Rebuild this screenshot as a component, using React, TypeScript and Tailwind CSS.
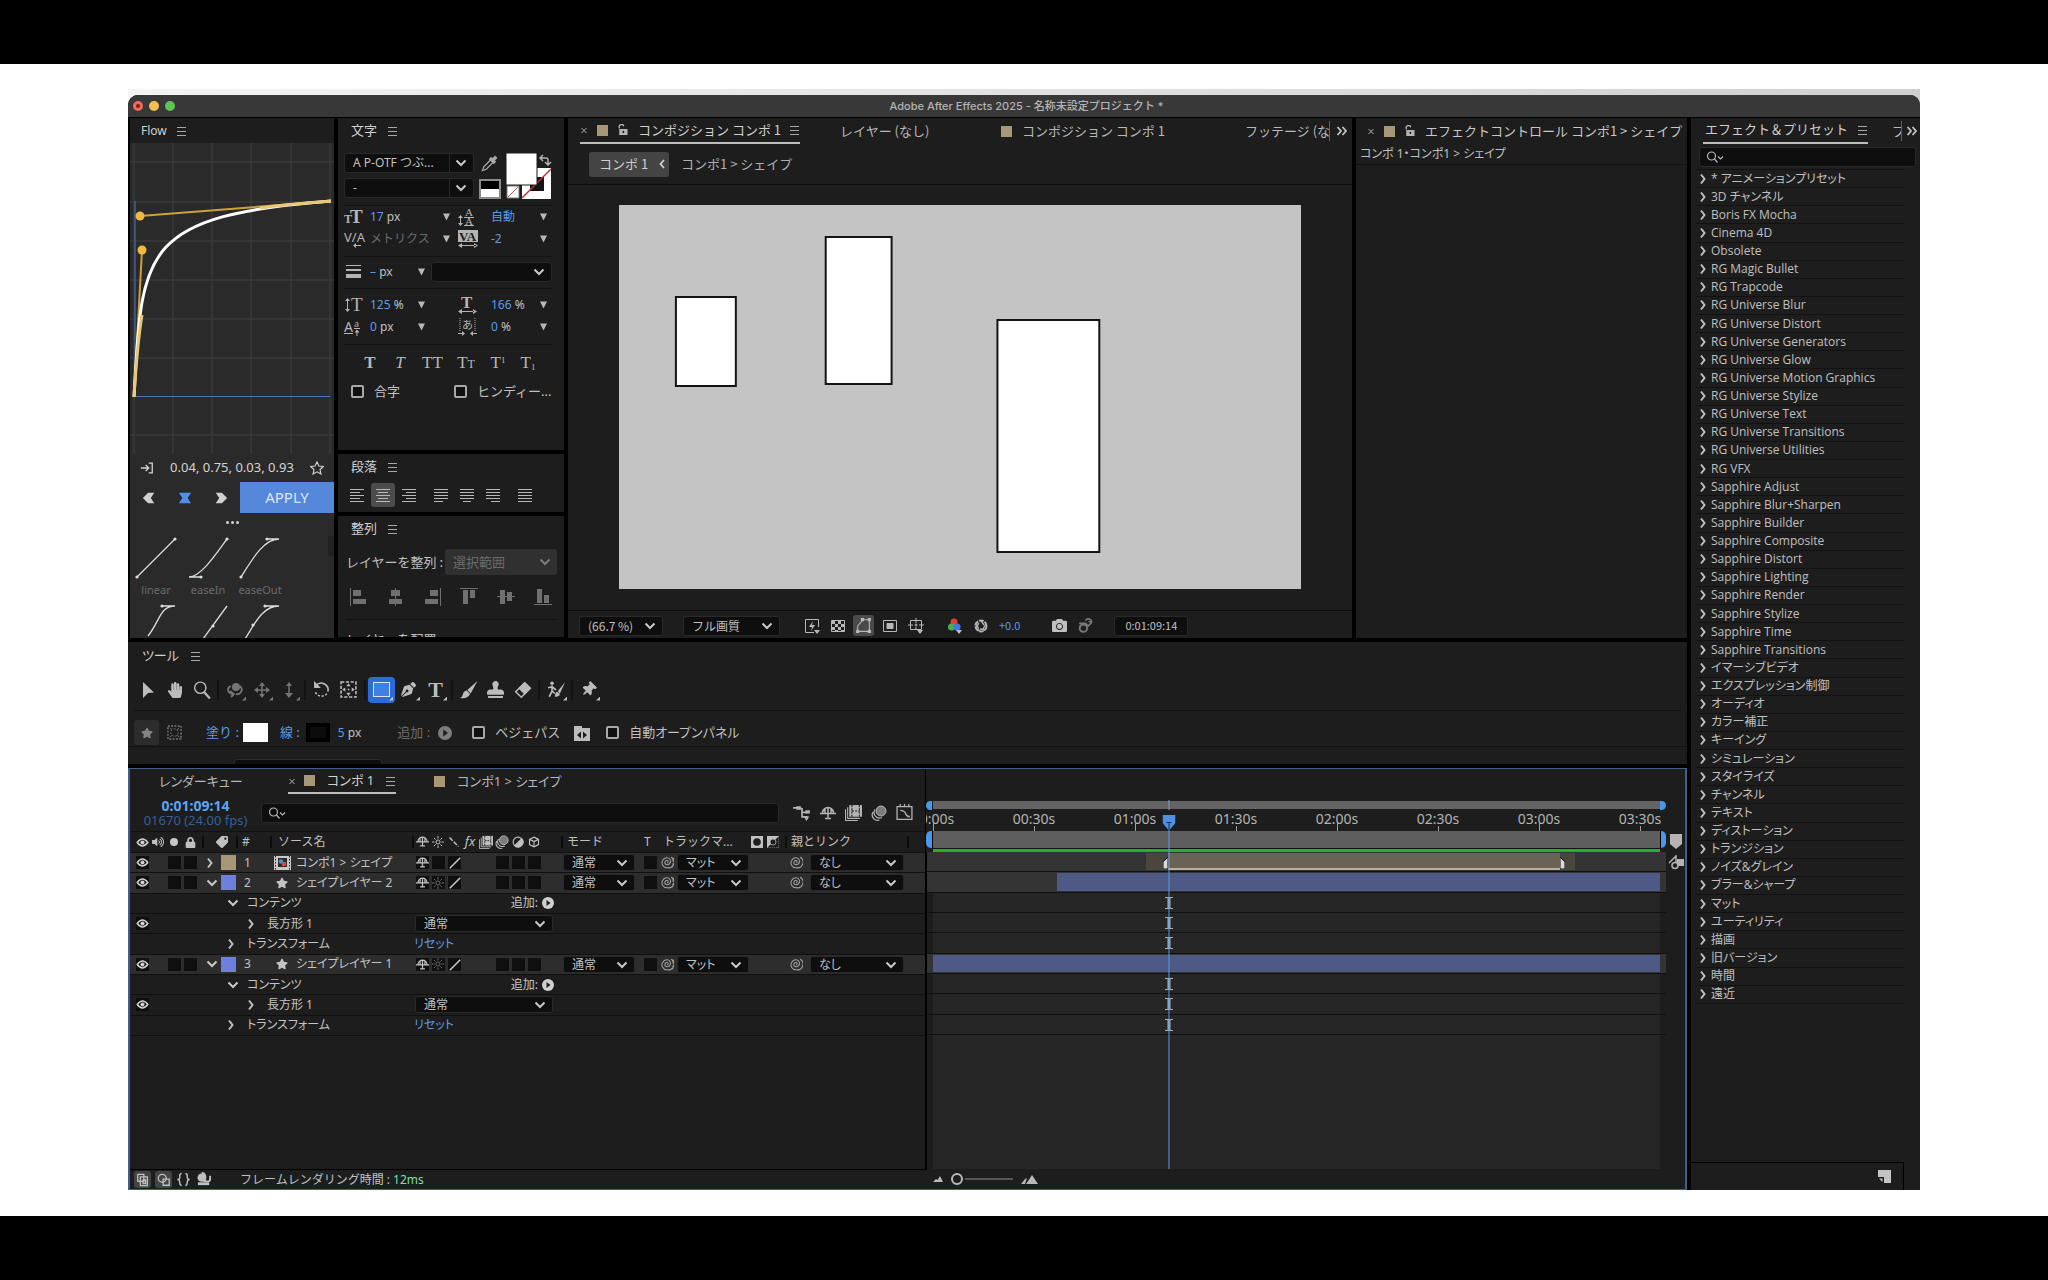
import React from "react";
import clsx from "clsx";
import {
  FaCamera,
  FaEraser,
  FaHandPaper,
  FaLock,
  FaPenNib,
  FaStamp,
  FaStar,
  FaTag,
  FaThumbtack,
  FaVolumeUp,
} from "react-icons/fa";

interface SvgProps {
  children: React.ReactNode;
  className?: string;
}

// 16x16 stroke icon
const Icon = ({ children, className = "size-4" }: SvgProps) => (
  <svg
    viewBox="0 0 16 16"
    fill="none"
    stroke="currentColor"
    aria-hidden="true"
    className={clsx("shrink-0", className)}
  >
    {children}
  </svg>
);

const Burger = () => (
  <button type="button" aria-label="パネルメニュー" className="h-3 w-2.5 shrink-0 text-[#a8a8a8]">
    <svg viewBox="0 0 10 12" className="h-3 w-2.5" stroke="currentColor" aria-hidden="true">
      <path d="M0 2.5h9M0 6.5h9M0 10.5h9" />
    </svg>
  </button>
);

const Down = ({ className = "text-[#c8c8c8]" }: { className?: string }) => (
  <svg viewBox="0 0 12 8" className={clsx("h-2 w-3 shrink-0", className)} fill="none" stroke="currentColor" strokeWidth="2" aria-hidden="true">
    <path d="M1.5 1.5 6 6l4.5-4.5" />
  </svg>
);

const Right = () => (
  <svg viewBox="0 0 8 12" className="h-3 w-2 shrink-0 text-[#c0c0c0]" fill="none" stroke="currentColor" strokeWidth="2" aria-hidden="true">
    <path d="M2 1.5 5.5 6 2 10.5" />
  </svg>
);

const Tri = () => (
  <svg viewBox="0 0 10 10" className="size-2.5 shrink-0 text-[#b8b8b8]" fill="currentColor" aria-hidden="true">
    <path d="M2 1.500h7L5.500 8.500z" />
  </svg>
);

const Sep = () => <span className="h-5 w-0.5 shrink-0 bg-[#121212]" />;

const ToolSep = () => <span className="mx-0.5 h-5 w-0.5 shrink-0 bg-[#121212]" />;

const HeadSep = () => <span className="ml-auto h-3 w-0.5 shrink-0 bg-[#0c0c0c]" />;

const CloseMark = () => (
  <button type="button" aria-label="閉じる" className="size-2 text-[#b0b0b0]">
    <svg viewBox="0 0 8 8" className="size-2" stroke="currentColor" aria-hidden="true">
      <path d="M1.5 2 6.5 7M6.5 2 1.5 7" />
    </svg>
  </button>
);

const Lock = () => (
  <Icon className="size-3 text-[#b4b4b4]">
    <path d="M3 6V4.500a3 3 0 0 1 6-1.500" strokeWidth="1.800" />
    <path d="M3 6.500h11v8H3z" fill="currentColor" stroke="none" />
    <path d="M8.500 9v3" stroke="#1d1d1d" strokeWidth="2" />
  </Icon>
);

const Swatch = () => <span className="size-[11px] shrink-0 bg-[#a89878]" />;

const Chevrons = () => (
  <button type="button" aria-label="その他のパネル" className="text-[#c4c4c4]">
    <svg viewBox="0 0 12 10" className="h-2.5 w-3" fill="none" stroke="currentColor" strokeWidth="1.800" aria-hidden="true">
      <path d="M1.500 1 5 5 1.500 9M6.500 1 10 5 6.500 9" />
    </svg>
  </button>
);

const SearchGlyph = () => (
  <svg viewBox="0 0 18 12" className="h-3 w-4.5 shrink-0 text-[#b4b4b4]" fill="none" stroke="currentColor" strokeWidth="1.200" aria-hidden="true">
    <circle cx="5.500" cy="5" r="4" />
    <path d="m8.500 8 3 3.500M12 5.500 14.500 8 17 5.500" />
  </svg>
);

interface SelectProps {
  label: string;
  value: string;
  className?: string;
  dim?: boolean;
  split?: boolean;
}

const Select = ({ label, value, className, dim, split }: SelectProps) => (
  <span
    className={clsx(
      "grid shrink-0 items-center rounded-[3px]",
      dim ? "bg-[#303030] text-[#6c6c6c]" : "border border-[#292929] bg-[#0e0e0e] text-[#c0c0c0]",
      className,
    )}
  >
    <select aria-label={label} className="col-start-1 row-start-1 h-full w-full appearance-none pl-2 outline-none">
      <option>{value}</option>
    </select>
    <span
      className={clsx(
        "pointer-events-none col-start-1 row-start-1 flex items-center justify-self-end pr-1.5",
        split && "h-full border-l border-[#292929] pl-[5px]",
      )}
    >
      <Down className={dim ? "text-[#7c7c7c]" : "text-[#c8c8c8]"} />
    </span>
  </span>
);

const Check = ({ label }: { label: string }) => (
  <label className="flex items-center gap-2.5">
    <input type="checkbox" className="size-[13px] shrink-0 appearance-none rounded-[2px] border-2 border-[#a8a8a8] bg-[#101010]" />
    {label}
  </label>
);

/* ---------- Flow ---------- */

const presets = [
  { name: "linear", d: "M3 41 41 3", dots: [[3, 41], [41, 3]] },
  { name: "easeIn", d: "M3 41h12M3 41C15 41 30 18 41 3", dots: [[15, 41], [41, 3]] },
  { name: "easeOut", d: "M3 41C15 22 26 3 41 3M29 3h12", dots: [[3, 41], [29, 3]] },
];

const morePresets = [
  { d: "M14 33C26 18 26 3 41 3M28 3h13", dots: [[28, 3]] },
  { d: "M17 36 41 3", dots: [[27, 23]] },
  { d: "M7 36C16 22 24 3 41 3M27 3h14", dots: [[27, 3], [15, 22]] },
];

const Curve = ({ d, dots }: { d: string; dots: number[][] }) => (
  <svg viewBox="0 0 44 44" className="size-11" fill="none" stroke="#dcdcdc" strokeWidth="1.300" aria-hidden="true">
    <path d={d} />
    {dots.map(([x, y]) => (
      <circle key={`${x}-${y}`} cx={x} cy={y} r="1.600" fill="#dcdcdc" stroke="none" />
    ))}
  </svg>
);

const FlowPanel = () => (
  <section className="flex w-[204px] shrink-0 flex-col overflow-hidden bg-[#2a2a2a]">
    <header className="flex h-[25px] shrink-0 items-center gap-2.5 bg-[#1d1d1d] pl-[11px] text-xs text-[#cfcfcf]">
      Flow <Burger />
    </header>
    <svg viewBox="0 0 204 311" className="h-[311px] w-full shrink-0" fill="none" role="img" aria-label="イージングカーブ">
      <path
        d="M4 0v311M43 0v311M82 0v311M121 0v311M161 0v311M200 0v311M0 19h204M0 59h204M0 98h204M0 137h204M0 176h204M0 215h204M0 292h204"
        stroke="#3a3a3a"
        strokeWidth="1.500"
      />
      <path d="M5 58v195.500h195" stroke="#4a78c0" />
      <path d="M4 254 12 107M201 58 10 73" stroke="#d0a03c" strokeWidth="2" />
      <path d="M4 254C12 107 10 73 201 58" stroke="#fff" strokeWidth="3" />
      <path d="M4 254C6 222 8 196 12 172M130 65C150 62 174 60 201 58" stroke="#e8c878" strokeWidth="3" />
      <circle cx="10" cy="73" r="4.500" fill="#f0b840" />
      <circle cx="12" cy="107" r="4.500" fill="#f0b840" />
    </svg>
    <div className="flex h-[28px] shrink-0 items-center justify-between pr-2.5 pl-2.5 text-[13px] text-[#d4d4d4]">
      <Icon className="size-3.5">
        <path d="M1 8h9M6.500 4.500 10 8l-3.500 3.500M10 2.500h4v11h-4" strokeWidth="1.500" />
      </Icon>
      <output>0.04, 0.75, 0.03, 0.93</output>
      <Icon className="size-3.5">
        <path d="m8 1 2.200 4.700 5.100.6-3.800 3.500 1 5.100L8 12.400l-4.500 2.500 1-5.100L.7 6.300l5.100-.6z" strokeWidth="1.300" />
      </Icon>
    </div>
    <div className="flex h-[31px] shrink-0 items-center text-[#d0d0d0]">
      <div className="flex flex-1 justify-between pr-3 pl-3">
        <button type="button" aria-label="前へ">
          <Icon className="size-3.5"><path d="M7 2h7l-4 6 4 6H7L1 8z" fill="currentColor" stroke="none" /></Icon>
        </button>
        <button type="button" aria-label="両方" className="text-[#5090e8]">
          <Icon className="size-3.5"><path d="M1 2h14l-4 6 4 6H1l4-6z" fill="currentColor" stroke="none" /></Icon>
        </button>
        <button type="button" aria-label="次へ">
          <Icon className="size-3.5"><path d="M2 2h7l6 6-6 6H2l4-6z" fill="currentColor" stroke="none" /></Icon>
        </button>
      </div>
      <button type="button" className="h-[31px] w-[94px] bg-[#5588da] text-[15px] text-[#dde6f5]">APPLY</button>
    </div>
    <button type="button" aria-label="オプション" className="flex h-[23px] shrink-0 items-start justify-center gap-[2px] pt-2">
      <i className="size-[3px] rounded-full bg-[#d4d4d4]" />
      <i className="size-[3px] rounded-full bg-[#d4d4d4]" />
      <i className="size-[3px] rounded-full bg-[#d4d4d4]" />
    </button>
    <div className="flex shrink-0 justify-between pl-1">
      <ul className="flex gap-2">
        {presets.map((p) => (
          <li key={p.name} className="flex h-[67px] w-11 flex-col items-center text-[11px] text-[#6c6c6c]">
            <Curve d={p.d} dots={p.dots} />
            <span className="mt-0.5">{p.name}</span>
          </li>
        ))}
      </ul>
      <span className="h-5 w-1.5 bg-[#222]" />
    </div>
    <div className="flex gap-2 pl-1">
      {morePresets.map((p) => (
        <Curve key={p.d} d={p.d} dots={p.dots} />
      ))}
    </div>
  </section>
);

/* ---------- Character / Paragraph / Align ---------- */

const PanelHead = ({ title }: { title: string }) => (
  <header className="flex h-[25px] shrink-0 items-center gap-[11px] pl-[13px] text-[13px] text-[#cfcfcf]">
    <h2>{title}</h2>
    <Burger />
  </header>
);

const Rule = () => <hr className="border-[#121212]" />;

const Num = ({ value, unit }: { value: string; unit?: string }) => (
  <span className="whitespace-nowrap text-[#5a9ce8]">
    {value}
    {unit && <span className="text-[#c0c0c0]"> {unit}</span>}
  </span>
);

interface CharRowProps {
  left: React.ReactNode;
  leftValue: React.ReactNode;
  right: React.ReactNode;
  rightValue: React.ReactNode;
  wide?: boolean;
}

const CharRow = ({ left, leftValue, right, rightValue, wide }: CharRowProps) => (
  <div className="flex h-[22px] items-center justify-between">
    <div className="flex items-center">
      <span className="w-[26px]">{left}</span>
      <span className={wide ? "w-[71px]" : "w-[46px]"}>{leftValue}</span>
      <Tri />
    </div>
    <div className="flex w-[94px] items-center">
      <span className="w-[33px]">{right}</span>
      <span className="w-[47px]">{rightValue}</span>
      <Tri />
    </div>
  </div>
);

const GlyphT = ({ children }: SvgProps) => (
  <svg viewBox="0 0 20 18" className="h-[18px] w-5 overflow-visible font-['Liberation_Serif',serif] text-[#b4b4b4]" fill="currentColor" aria-hidden="true">
    {children}
  </svg>
);

const CharacterPanel = () => (
  <section className="flex h-[332px] flex-col bg-[#1d1d1d]">
    <PanelHead title="文字" />
    <div className="flex flex-col pr-3 pl-1.5 text-xs text-[#c0c0c0]">
      <div className="mt-2.5 flex h-[46px] justify-between">
        <div className="flex flex-col gap-[5px]">
          <Select split label="フォント" value="A P-OTF つぶ..." className="h-5 w-[130px]" />
          <Select split label="スタイル" value="-" className="h-5 w-[130px]" />
        </div>
        <div className="flex flex-col items-center justify-between">
          <Icon className="size-5 text-[#a8a8a8]">
            <path d="m2 14 1-3 6-6 2 2-6 6z" />
            <path d="m8 4 4 4M10 6l3-3" strokeWidth="2.800" />
          </Icon>
          <span className="h-5 w-[22px] border-2 border-[#8c8c8c] bg-linear-to-b from-black from-50% to-white to-50%" />
        </div>
        <svg viewBox="0 0 46 46" className="h-[46px] w-[46px]" aria-hidden="true">
          <path d="M16 15h29v31H16z" fill="#fff" />
          <path d="M24 24h14v14H24z" fill="#151515" />
          <path d="M16 45 45 16" stroke="#c03030" strokeWidth="1.500" />
          <path d="M0 32h31V0H0z" fill="#fff" stroke="#1d1d1d" />
          <path d="M1 33h12v12H1z" fill="#fff" stroke="#777" />
          <path d="M2 44 12 34" stroke="#c05050" />
          <path d="M35 5h5q2 0 2 2v5M37 2l-3 3 3 3M39 9l3 3 3-3" fill="none" stroke="#b0b0b0" strokeWidth="1.500" />
        </svg>
      </div>
      <div className="mt-1.5"><Rule /></div>
      <CharRow
        wide
        left={<GlyphT><text x="0" y="15" fontSize="12" fontWeight="700">T</text><text x="6" y="15" fontSize="19" fontWeight="700">T</text></GlyphT>}
        leftValue={<Num value="17" unit="px" />}
        right={<GlyphT><text x="7" y="8" fontSize="11">A</text><text x="7" y="17" fontSize="11">A</text><path d="M6 9h10v1H6zM6 17h10v1H6zM2 8h1v9H2zM0 10l2.500-3L5 10zM0 15h5l-2.500 3z" /></GlyphT>}
        rightValue={<Num value="自動" />}
      />
      <CharRow
        wide
        left={<GlyphT><text x="0" y="12" fontSize="13" className="font-['Noto_Sans']">V/A</text><path d="M10 15h7v1h-7zM12 13v5l-3-2.500z" /></GlyphT>}
        leftValue={<span className="text-[#6c6c6c]">メトリクス</span>}
        right={<GlyphT><path d="M0 0h20v12H0z" /><text x="1" y="11" fontSize="13" fontWeight="700" fill="#1d1d1d">VA</text><path d="M2 15h16v1H2zM4 13v5l-4-2.500zM16 13v5l4-2.500z" /></GlyphT>}
        rightValue={<Num value="-2" />}
      />
      <div className="mt-1.5 mb-[5px]"><Rule /></div>
      <div className="flex h-[20px] items-center">
        <span className="w-[26px]"><GlyphT><path d="M2 2h15v1H2zM2 6h15v2H2zM2 11h15v4H2z" /></GlyphT></span>
        <span className="w-[46px]"><Num value="–" unit="px" /></span>
        <Tri />
        <Select label="線の種類" value="" className="ml-auto h-5 w-[121px]" />
      </div>
      <div className="mt-1.5 mb-[5px]"><Rule /></div>
      <CharRow
        left={<GlyphT><path d="M3 3h1v11H3zM1 5l2.500-3L6 5zM1 13h5l-2.500 3z" /><text x="7" y="15" fontSize="19">T</text></GlyphT>}
        leftValue={<Num value="125" unit="%" />}
        right={<GlyphT><text x="3" y="12" fontSize="17" fontWeight="700">T</text><path d="M3 15h13v1H3zM4 13v5l-4-2.500zM15 13v5l4-2.500z" /></GlyphT>}
        rightValue={<Num value="166" unit="%" />}
      />
      <CharRow
        left={<GlyphT><text x="0" y="14" fontSize="14" className="font-['Noto_Sans']">A</text><text x="10" y="9" fontSize="9" className="font-['Noto_Sans']">a</text><path d="M0 15h9v1H0zM10 10h6v1h-6zM12.500 13h1v5h-1zM10.500 14.500l2.500-3 2.500 3z" /></GlyphT>}
        leftValue={<Num value="0" unit="px" />}
        right={<GlyphT><text x="4" y="11" fontSize="11" className="font-['Noto_Sans_CJK_JP']">あ</text><path d="M2 0v13M17 0v13" stroke="currentColor" strokeDasharray="1 1" /><path d="M0 15h4v1H0zM4 13v5l3-2.500zM15 15h4v1h-4zM15 13v5l-3-2.500z" /></GlyphT>}
        rightValue={<Num value="0" unit="%" />}
      />
      <div className="mt-1.5"><Rule /></div>
      <div className="flex h-9 items-center justify-between pr-4 pl-[18px] font-['Liberation_Serif',serif] text-[17px] text-[#b8b8b8]">
        <button type="button" className="w-4 font-bold">T</button>
        <button type="button" className="w-4 italic">T</button>
        <button type="button" className="w-5">TT</button>
        <button type="button" className="w-5">T<span className="text-[12px]">T</span></button>
        <button type="button" className="w-4">T<sup className="text-[9px]">1</sup></button>
        <button type="button" className="w-4">T<sub className="text-[9px]">1</sub></button>
      </div>
      <div className="mt-0.5 flex gap-[54px] pl-[7px] text-[13px]">
        <Check label="合字" />
        <Check label="ヒンディー..." />
      </div>
    </div>
  </section>
);

const lineSets = [
  "M1 2.500h14M1 5.500h10M1 8.500h14M1 11.500h10M1 14.500h14",
  "M1 2.500h14M3 5.500h10M1 8.500h14M3 11.500h10M1 14.500h14",
  "M1 2.500h14M5 5.500h10M1 8.500h14M5 11.500h10M1 14.500h14",
  "M1 2.500h14M1 5.500h14M1 8.500h14M1 11.500h14M1 14.500h9",
  "M1 2.500h14M1 5.500h14M1 8.500h14M1 11.500h14M4 14.500h8",
  "M1 2.500h14M1 5.500h14M1 8.500h14M1 11.500h14M6 14.500h9",
  "M1 2.500h14M1 5.500h14M1 8.500h14M1 11.500h14M1 14.500h14",
];

const ParagraphPanel = () => (
  <section className="h-[58px] bg-[#1d1d1d]">
    <PanelHead title="段落" />
    <div className="flex h-8 items-center gap-0.5 pl-[7px] text-[#b8b8b8]">
      {lineSets.map((d, i) => (
        <button
          key={d}
          type="button"
          aria-label={`行揃え ${i + 1}`}
          className={clsx(
            "grid h-6 w-6 place-items-center rounded-[3px]",
            i === 1 && "bg-[#4c4c4c]",
            (i === 2 || i === 5) && "mr-1.5",
          )}
        >
          <Icon><path d={d} /></Icon>
        </button>
      ))}
    </div>
  </section>
);

const alignSets = [
  "M0 0h1v18H0zM3 2h8v6H3zM3 11h13v5H3z",
  "M8 0h1v18H8zM4 2h9v6H4zM2 11h13v5H2z",
  "M16 0h1v18h-1zM6 2h8v6H6zM1 11h13v5H1z",
  "M0 0h18v1H0zM3 2h5v14H3zM10 2h5v8h-5z",
  "M0 8h18v1H0zM3 2h5v14H3zM10 4h5v9h-5z",
  "M0 16h18v1H0zM3 1h5v14H3zM10 7h5v8h-5z",
];

const AlignPanel = () => (
  <section className="h-[121px] overflow-hidden bg-[#1d1d1d]">
    <PanelHead title="整列" />
    <label className="mt-2 flex h-[26px] items-center justify-between pr-[7px] pl-2 font-['Noto_Sans_CJK_JP',sans-serif] text-[13px] text-[#c0c0c0]">
      レイヤーを整列 :
      <Select dim label="整列の対象" value="選択範囲" className="h-[26px] w-28" />
    </label>
    <div className="mt-3 flex h-5 items-center justify-between pr-3 pl-3 text-[#707070]">
      {alignSets.map((d) => (
        <svg key={d} viewBox="0 0 18 18" className="size-[18px]" fill="currentColor" aria-hidden="true">
          <path d={d} />
        </svg>
      ))}
    </div>
    <div className="mx-2 mt-3"><Rule /></div>
    <p className="mt-2.5 pl-2 text-[13px] text-[#c0c0c0]">レイヤーを配置</p>
  </section>
);

/* ---------- Composition viewer ---------- */

const ViewerBar = () => (
  <div className="flex h-[28px] items-center border-t border-[#0c0c0c] pt-0.5 pl-[11px] text-xs text-[#c0c0c0]">
    <Select label="拡大率" value="(66.7 %)" className="h-5 w-[84px]" />
    <span className="ml-2.5"><Sep /></span>
    <Select label="解像度" value="フル画質" className="ml-2.5 h-5 w-[97px]" />
    <span className="ml-2.5"><Sep /></span>
    <div className="ml-[11px] flex items-center gap-[5px] text-[#b8b8b8]">
      <span className="grid size-[21px] place-items-center"><Icon><path d="M10 14.500H1.500v-13h13V9" /><path d="M9 3 5 9h3l-1 4 4-6H8z" fill="currentColor" stroke="none" /><path d="M10 12h6l-3 4z" fill="currentColor" stroke="none" /></Icon></span>
      <span className="grid size-[21px] place-items-center"><Icon><path d="M1.500 2.500h13v11h-13z" /><path d="M2 3h3v3H2zM8 3h3v3H8zM5 6h3v3H5zM11 6h3v3h-3zM2 9h3v3H2zM8 9h3v3H8zM5 12h3v2H5zM11 12h3v2h-3z" fill="currentColor" stroke="none" /></Icon></span>
      <span className="grid size-[21px] place-items-center rounded-[3px] bg-[#4a4a4a]"><Icon className="size-[17px]"><path d="M2.500 13.500h11v-11H7C6 6 2.500 7 2.500 9z" /><path d="M1 12h3v3H1zM12 12h3v3h-3zM12 1h3v3h-3zM5.500 1h3v3h-3z" fill="currentColor" stroke="none" /></Icon></span>
      <span className="grid size-[21px] place-items-center"><Icon><path d="M1.500 2.500h13v11h-13z" /><path d="M5 5.500h6v5H5z" fill="currentColor" /></Icon></span>
      <span className="grid size-[21px] place-items-center"><Icon><path d="M2.500 2.500h11v9h-11zM8 0v5M8 9v3M0 7h5M11 7h5M6.500 7h3M8 5.500v3" /><path d="M9 12h6l-3 4z" fill="currentColor" stroke="none" /></Icon></span>
    </div>
    <span className="ml-2.5"><Sep /></span>
    <svg viewBox="0 0 16 16" className="ml-[11px] size-4" aria-label="カラーチャンネル">
      <circle cx="7" cy="4" r="3.500" fill="#e04030" />
      <circle cx="4.500" cy="9" r="3.500" fill="#48b048" />
      <circle cx="10" cy="9" r="3.500" fill="#4078e8" />
      <path d="M9 12h6l-3 4z" fill="#c0c0c0" />
    </svg>
    <Icon className="ml-2.5 size-4 text-[#b4b4b4]">
      <circle cx="8" cy="8" r="5.500" strokeWidth="2" strokeDasharray="4.800 1" />
      <path d="M8 2.500 11 7M13 6l-3 5M12 12l-5-1M6 13 4.500 8M3 9l3-4" strokeWidth="1.400" />
    </Icon>
    <span className="ml-2.5 text-[11px] text-[#5a9ce8]">+0.0</span>
    <span className="ml-5"><Sep /></span>
    <FaCamera className="ml-3 size-[15px] text-[#c0c0c0]" />
    <Icon className="ml-2.5 size-[17px] text-[#787878]">
      <circle cx="6" cy="10.500" r="3.500" strokeWidth="1.800" />
      <path d="M2 6h6l3 3M8 3.500Q9 1 12 2q3 2 1 4l-3 3M11 4l2 1" strokeWidth="1.500" />
    </Icon>
    <span className="ml-2.5"><Sep /></span>
    <button type="button" className="ml-2.5 h-5 w-[74px] rounded-[3px] border border-[#292929] bg-[#0e0e0e] text-[11px]">0:01:09:14</button>
    <span className="ml-2.5"><Sep /></span>
  </div>
);

const ViewerPanel = () => (
  <section className="flex min-w-0 flex-1 flex-col bg-[#1d1d1d] font-['Noto_Sans_CJK_JP',sans-serif]">
    <header className="flex h-[26px] items-center pr-1 pl-3 text-[13px] whitespace-nowrap text-[#b8b8b8]">
      <div className="flex h-[26px] items-center gap-[9px] border-b-2 border-[#bcbcbc] text-[#d0d0d0]">
        <CloseMark />
        <Swatch />
        <Lock />
        <h2>コンポジション コンポ 1</h2>
        <Burger />
      </div>
      <span className="ml-10">レイヤー (なし)</span>
      <span className="ml-auto flex items-center gap-2.5"><Swatch />コンポジション コンポ 1</span>
      <span className="mr-1.5 ml-20 w-[85px] overflow-hidden border-r border-[#606060] leading-5">フッテージ (なし)</span>
      <Chevrons />
    </header>
    <nav className="flex h-[41px] items-center gap-3 border-b border-[#0c0c0c] pl-[21px] text-[13px] text-[#b0b0b0]">
      <button type="button" className="flex h-[25px] w-20 items-center justify-between rounded-[3px] bg-[#444] pr-1 pl-2.5 text-[#d0d0d0]">
        コンポ 1
        <svg viewBox="0 0 6 10" className="h-2.5 w-1.5" fill="none" stroke="currentColor" strokeWidth="1.800" aria-hidden="true"><path d="M5 1 1.500 5 5 9" /></svg>
      </button>
      <a href="#comp">コンポ1 &gt; シェイプ</a>
    </nav>
    <div className="flex-1 px-[51px] pt-5">
      <svg viewBox="0 0 683 384" preserveAspectRatio="none" className="h-[384px] w-full bg-[#c4c4c4]" role="img" aria-label="コンポジションプレビュー">
        <g fill="#fff" stroke="#141414" strokeWidth="2">
          <path d="M57 92h60v89H57zM207 32h66v147h-66zM379 115h102v232H379z" />
        </g>
      </svg>
    </div>
    <ViewerBar />
  </section>
);

const EffectControls = () => (
  <section className="w-[331px] shrink-0 bg-[#1d1d1d]">
    <header className="flex h-[26px] items-center gap-[9px] pl-[11px] font-['Noto_Sans_CJK_JP',sans-serif] text-[13px] whitespace-nowrap text-[#c8c8c8]">
      <CloseMark />
      <Swatch />
      <Lock />
      <h2>エフェクトコントロール コンポ1 &gt; シェイプ</h2>
    </header>
    <p className="h-[21px] border-b border-[#111] pl-1 text-xs leading-5 text-[#c0c0c0] [font-feature-settings:'palt']">コンポ 1・コンポ1 &gt; シェイプ</p>
  </section>
);

/* ---------- Tools ---------- */

interface ToolProps {
  name: string;
  children: React.ReactNode;
  more?: boolean;
  dim?: boolean;
  active?: boolean;
}

const Tool = ({ name, children, more, dim, active }: ToolProps) => (
  <button
    type="button"
    aria-label={name}
    className={clsx(
      "relative grid h-[26px] w-[27px] place-items-center rounded-[4px]",
      dim ? "text-[#757575]" : "text-[#bcbcbc]",
      active && "bg-[#2c6cd8]",
    )}
  >
    {children}
    {more && <span className="absolute right-0.5 bottom-0.5 size-1 bg-current [clip-path:polygon(100%_0,100%_100%,0_100%)]" />}
  </button>
);

const AddDot = ({ className }: { className?: string }) => (
  <svg viewBox="0 0 12 12" className={clsx("shrink-0", className)} aria-hidden="true">
    <circle cx="6" cy="6" r="6" fill="currentColor" />
    <path d="M4.500 3 8.500 6l-4 3z" fill="#1d1d1d" />
  </svg>
);

const ToolsPanel = () => (
  <section className="h-[122px] overflow-hidden bg-[#1d1d1d]">
    <header className="flex h-[27px] items-center gap-3 pl-3.5 text-[13px] text-[#cfcfcf]">
      <h2 className="[font-feature-settings:'palt']">ツール</h2>
      <Burger />
    </header>
    <div className="mx-1.5 flex h-[42px] items-center border-b border-[#111]">
      <Tool name="選択"><Icon><path d="m3 0 11 10.500-6 .5-5 5z" fill="currentColor" stroke="none" /></Icon></Tool>
      <Tool name="手のひら"><FaHandPaper className="size-4" /></Tool>
      <Tool name="ズーム"><Icon className="size-[18px]"><circle cx="6.500" cy="6" r="5" strokeWidth="1.300" /><path d="m10 10 5 5.500" strokeWidth="2" /></Icon></Tool>
      <ToolSep />
      <Tool name="カメラ周回" more dim><Icon><circle cx="9" cy="5" r="4" fill="currentColor" stroke="none" /><path d="M4 4Q1 5 1 8t5 4M3 9l4 3-3 3M13 4q3 3 1 6-2 3-5 2" strokeWidth="1.800" /></Icon></Tool>
      <Tool name="カメラパン" more dim><Icon><path d="M8 2v12M2 8h12" strokeWidth="1.500" /><path d="m8 0 3 4H5zM8 16l3-4H5zM0 8l4-3v6zM16 8l-4-3v6z" fill="currentColor" stroke="none" /></Icon></Tool>
      <Tool name="カメラドリー" more dim><Icon><path d="M8 2v11" strokeWidth="1.500" /><path d="m8 0 3 4H5zM8 16l4-5H4z" fill="currentColor" stroke="none" /></Icon></Tool>
      <ToolSep />
      <Tool name="回転"><Icon className="size-[17px]"><path d="M3 4a6.500 6.500 0 0 1 11 6" strokeWidth="1.500" /><path d="M13 12a6.500 6.500 0 0 1-11-2" strokeWidth="1.500" strokeDasharray="2 1.500" /><path d="M1 0v6.500h6.500z" fill="currentColor" stroke="none" /></Icon></Tool>
      <Tool name="アンカーポイント"><Icon className="size-[17px]"><path d="M1 1h14v14H1z" strokeWidth="1.500" strokeDasharray="3 1.500" /><path d="m8 2 2 3H6zM8 14l2-3H6zM2 8l3-2v4zM14 8l-3-2v4zM7.300 7.300h1.500v1.500H7.300z" fill="currentColor" stroke="none" /></Icon></Tool>
      <ToolSep />
      <Tool name="長方形" more active><span className="h-[15px] w-[17px] border border-[#d8e4f8] bg-[#4080e0]" /></Tool>
      <Tool name="ペン" more><FaPenNib className="size-[15px]" /></Tool>
      <Tool name="文字" more><span className="font-['Liberation_Serif',serif] text-[22px] leading-none font-bold">T</span></Tool>
      <ToolSep />
      <Tool name="ブラシ"><Icon className="size-[18px]"><path d="M15.500 0 6.500 8l3 3z" fill="currentColor" stroke="none" /><path d="M6 8.500q-3 .5-3.500 3.500Q2 14.500 0 15q6 1.500 9-3.500z" fill="currentColor" stroke="none" /></Icon></Tool>
      <Tool name="コピースタンプ"><FaStamp className="size-[17px]" /></Tool>
      <Tool name="消しゴム"><Icon className="size-[18px]"><path d="m9.500 1.500 5 5-8 8-5-5z" strokeWidth="1.300" /><path d="m9.500 1.500 5 5-5 5-5-5z" fill="currentColor" /></Icon></Tool>
      <ToolSep />
      <Tool name="ロトブラシ" more><Icon className="size-[18px]"><circle cx="4.500" cy="2" r="1.600" fill="currentColor" stroke="none" /><path d="M4.500 4v5L2 14M4.500 9 7 11M1 6l3.500-1L8 8" strokeWidth="1.500" /><path d="M16 1 9.500 9l2 2zM9 9.500q-2 1-2 4.500 4 0 4.500-2.500z" fill="currentColor" stroke="none" /></Icon></Tool>
      <ToolSep />
      <Tool name="パペットピン" more><FaThumbtack className="size-[15px] rotate-45" /></Tool>
    </div>
    <div className="flex h-9 items-center border-b border-[#121212] pt-2 pl-1.5 text-[13px] whitespace-nowrap">
      <button type="button" aria-label="シェイプ" className="grid size-[25px] place-items-center rounded-[3px] bg-[#2c2c2c]"><FaStar className="size-3 text-[#848484]" /></button>
      <Icon className="ml-2 size-[15px] text-[#787878]"><path d="M1 1h14v14H1z" strokeWidth="1.500" strokeDasharray="2 1.500" /><circle cx="8" cy="8" r="4" strokeDasharray="2 1.500" /><path d="M3 3l2 2M13 3l-2 2M3 13l2-2M13 13l-2-2" /></Icon>
      <span className="ml-3"><Sep /></span>
      <button type="button" className="ml-3 text-[#5a9ce8]">塗り :</button>
      <span className="ml-1 h-[19px] w-[25px] bg-white" />
      <button type="button" className="ml-3 text-[#5a9ce8]">線 :</button>
      <span className="ml-1.5 h-[19px] w-6 border-4 border-black bg-[#0c0c0c]" />
      <span className="ml-2 text-xs"><Num value="5" unit="px" /></span>
      <span className="ml-9 text-[#6c6c6c]">追加 :</span>
      <AddDot className="ml-2 size-3.5 text-[#7c7c7c]" />
      <span className="mr-2 ml-3"><Sep /></span>
      <span className="text-[#c0c0c0]"><Check label="ベジェパス" /></span>
      <span className="ml-1.5"><Sep /></span>
      <Icon className="mr-4 ml-2 size-4 text-[#bcbcbc]"><path d="M0 1h8v2h8v13H0z" fill="currentColor" stroke="none" /><path d="m7 6.500-4 3.500 4 3.500zM9 6.500l4 3.500-4 3.500z" fill="#1d1d1d" stroke="none" /></Icon>
      <span className="text-[#c0c0c0] [font-feature-settings:'palt']"><Check label="自動オープンパネル" /></span>
    </div>
    <div className="mt-3 ml-[106px] h-5 w-[148px] rounded-[3px] border border-[#2c2c2c] bg-[#0e0e0e]" />
  </section>
);

/* ---------- Timeline ---------- */

type Row =
  | { kind: "layer"; index: number; name: string; color: string; comp?: boolean }
  | { kind: "contents" }
  | { kind: "rect" }
  | { kind: "transform" };

const rows: Row[] = [
  { kind: "layer", index: 1, name: "コンポ1 > シェイプ", color: "bg-[#a89878]", comp: true },
  { kind: "layer", index: 2, name: "シェイプレイヤー 2", color: "bg-[#6c80dc]" },
  { kind: "contents" },
  { kind: "rect" },
  { kind: "transform" },
  { kind: "layer", index: 3, name: "シェイプレイヤー 1", color: "bg-[#6c80dc]" },
  { kind: "contents" },
  { kind: "rect" },
  { kind: "transform" },
];

// length of the visible ruler; a 30s step is 101 units
const TOTAL = 727;
const pct = (n: number) => `${(n / TOTAL) * 100}%`;

const ticks = ["00:00s", "00:30s", "01:00s", "01:30s", "02:00s", "02:30s", "03:00s", "03:30s"];

const Eye = () => (
  <Icon className="size-[13px] text-[#d0d0d0]">
    <path d="M1.500 8Q8-.5 14.500 8 8 16.500 1.500 8z" strokeWidth="1.800" />
    <circle cx="8" cy="8" r="2.500" fill="currentColor" stroke="none" />
  </Icon>
);

const Box = ({ children }: { children?: React.ReactNode }) => (
  <span className="grid w-4 shrink-0 place-items-center">
    <span className="grid size-[13px] place-items-center bg-[#0f0f0f]">{children}</span>
  </span>
);

const Shy = ({ className = "size-3.5" }: { className?: string }) => (
  <Icon className={className}>
    <path d="M2.500 8a5.500 5.500 0 0 1 11 0M8 2v12M0 8.500h16M5 3.500V8M11 3.500V8M5 13.500h6" strokeWidth="1.500" />
  </Icon>
);

const Sun = ({ className }: { className?: string }) => (
  <Icon className={className}>
    <circle cx="8" cy="8" r="2.700" strokeWidth="1.300" />
    <path d="M8 0v3.500M8 12.500V16M0 8h3.500M12.500 8H16M2.500 2.500l2.300 2.300M11.200 11.200l2.300 2.300M13.500 2.500l-2.300 2.300M4.800 11.200l-2.300 2.300" strokeWidth="1.300" />
  </Icon>
);

const Blur = ({ className = "size-3.5" }: { className?: string }) => (
  <Icon className={className}>
    <circle cx="10" cy="6" r="5" fill="#7c7c7c" />
    <path d="M4 4.500a5.500 5.500 0 0 0 7 8M2 7a5.500 5.500 0 0 0 6.500 8" strokeWidth="1.200" />
  </Icon>
);

const Film = ({ className = "size-3.5" }: { className?: string }) => (
  <Icon className={className}>
    <path d="M4 1h12v11H4z" fill="currentColor" stroke="none" />
    <path d="M6.500 1v11M13.500 1v11M6.500 6.500h7" stroke="#1d1d1d" strokeDasharray="2 1" />
    <path d="M2.500 3v10.500H14M.5 5v10.500H12" />
  </Icon>
);

const Whip = ({ dots }: { dots?: boolean }) => (
  <Icon className="size-[13px] text-[#a0a0a0]">
    <path d="M12.500 1.500A7 7 0 0 1 8 14.500C2 15 0 9 2 5.500 4 1.500 10 1 11.500 5c1.200 3.500-2 6.500-5 5.500C3.500 9.500 4.500 5 7.500 5.500c2 .5 1.500 2.500 0 3" strokeWidth="1.300" />
    {dots && <path d="M15 2v5M15 9v2M13 13h2" strokeWidth="1.600" />}
  </Icon>
);

const LayerHead = () => (
  <div className="flex h-[21px] items-center border-b border-[#111] text-xs text-[#c0c0c0]">
    <div className="flex w-[76px] items-center pr-0.5 pl-1">
      <span className="grid w-4 place-items-center"><Eye /></span>
      <span className="grid w-4 place-items-center"><FaVolumeUp className="size-3" /></span>
      <span className="grid w-4 place-items-center"><i className="size-2 rounded-full bg-[#c8c8c8]" /></span>
      <span className="grid w-4 place-items-center"><FaLock className="size-[11px]" /></span>
      <HeadSep />
    </div>
    <div className="flex w-8 items-center pl-2.5"><FaTag className="size-3 rotate-90" /><HeadSep /></div>
    <div className="flex w-[34px] items-center pl-1">#<HeadSep /></div>
    <div className="flex w-[142px] items-center pl-1.5">ソース名<HeadSep /></div>
    <div className="flex w-[149px] items-center">
      <span className="grid w-4 place-items-center"><Shy className="size-[13px]" /></span>
      <span className="grid w-4 place-items-center"><Sun className="size-3" /></span>
      <span className="grid w-4 place-items-center"><Icon className="size-3"><path d="m2 2 12 12" strokeWidth="2" strokeDasharray="6 2" /></Icon></span>
      <span className="w-4 text-center text-[13px] italic">fx</span>
      <span className="grid w-4 place-items-center"><Film /></span>
      <span className="grid w-4 place-items-center"><Blur /></span>
      <span className="grid w-4 place-items-center"><Icon className="size-3"><circle cx="8" cy="8" r="6.500" strokeWidth="1.500" /><path d="M13 3A7 7 0 0 1 3 13z" fill="currentColor" /></Icon></span>
      <span className="grid w-4 place-items-center"><Icon className="size-3"><path d="m8 1.500 6 3v7l-6 3-6-3v-7zM2 4.500l6 3 6-3M8 7.500v7" strokeWidth="1.500" /></Icon></span>
      <HeadSep />
    </div>
    <div className="w-[79px] pl-1">モード</div>
    <div className="w-[18px] pl-0.5">T</div>
    <div className="w-[91px] pl-[3px]">トラックマ...</div>
    <div className="flex w-9 items-center gap-1">
      <Icon className="size-3"><path d="M0 0h16v16H0z" fill="currentColor" stroke="none" /><circle cx="8" cy="8" r="5" fill="#1d1d1d" stroke="none" /></Icon>
      <Icon className="size-3"><path d="M0 0h16L0 16z" fill="currentColor" stroke="none" /><circle cx="8" cy="8" r="4" fill="#1d1d1d" /><path d="M16 0v16H0" fill="none" strokeDasharray="2 1" /></Icon>
      <HeadSep />
    </div>
    <div className="flex w-[122px] items-center pl-1">親とリンク<HeadSep /></div>
  </div>
);

const LayerRow = ({ row }: { row: Extract<Row, { kind: "layer" }> }) => (
  <>
    <div className="flex w-[76px] pl-1">
      <Box><Eye /></Box>
      <span className="w-4" />
      <Box />
      <Box />
    </div>
    <div className="flex w-8 items-center justify-between pr-0.5">
      {row.comp ? <Right /> : <Down />}
      <span className={clsx("size-[15px]", row.color)} />
    </div>
    <span className="w-[34px] pl-1.5">{row.index}</span>
    <div className="flex w-[142px] items-center">
      <span className="flex w-6 items-center pl-0.5">
        {row.comp ? (
          <svg viewBox="0 0 17 14" className="h-3.5 w-[17px]" fill="none" aria-hidden="true">
            <path d="M0 0h17v14H0z" fill="#c8c8c8" />
            <path d="M1.500 0v14M15.500 0v14" stroke="#222" strokeDasharray="1.500 1.500" />
            <path d="M4 2h9v9H4z" fill="#2a2a2a" />
            <circle cx="7" cy="5.500" r="2.300" fill="#4090e0" />
            <path d="M8 6h4v4H8z" fill="#d05040" />
          </svg>
        ) : (
          <FaStar className="ml-0.5 size-3" />
        )}
      </span>
      {row.name}
    </div>
    <div className="flex w-[149px]">
      <Box><Shy className="size-[13px]" /></Box>
      <Box>{!row.comp && <Sun className="size-3 text-[#6c6c6c]" />}</Box>
      <Box><Icon className="size-3.5"><path d="M2 14 14 2" strokeWidth="1.800" /></Icon></Box>
      <span className="w-8" />
      <Box />
      <Box />
      <Box />
    </div>
    <div className="w-[79px]"><Select label="モード" value="通常" className="h-[17px] w-[72px]" /></div>
    <span className="w-[18px]"><Box /></span>
    <span className="w-[17px] pl-px"><Whip dots /></span>
    <Select label="トラックマット" value="マット" className="h-[17px] w-[72px]" />
    <span className="w-[38px]" />
    <span className="w-[23px] pl-[3px]"><Whip /></span>
    <Select label="親とリンク" value="なし" className="h-[17px] w-[94px]" />
  </>
);

const OutlineRow = ({ row }: { row: Row }) => (
  <div
    className={clsx(
      "flex min-h-0 flex-1 items-center border-b border-[#101010] [font-feature-settings:'palt']",
      row.kind === "layer" && "bg-[#2d2d2d]",
    )}
  >
    {row.kind === "layer" && <LayerRow row={row} />}
    {row.kind === "contents" && (
      <>
        <span className="flex w-[284px] items-center gap-2 pl-[97px]"><Down />コンテンツ</span>
        <span className="flex w-[140px] items-center justify-end gap-1">追加:<AddDot className="size-3 text-[#d0d0d0]" /></span>
      </>
    )}
    {row.kind === "rect" && (
      <>
        <span className="flex w-[285px] items-center pl-1">
          <Box><Eye /></Box>
          <span className="mr-3 ml-[97px]"><Right /></span>
          長方形 1
        </span>
        <Select label="長方形の描画モード" value="通常" className="h-[17px] w-[138px]" />
      </>
    )}
    {row.kind === "transform" && (
      <>
        <span className="flex w-[284px] items-center gap-3 pl-[97px]"><Right />トランスフォーム</span>
        <button type="button" className="text-[#5a9ce8]">リセット</button>
      </>
    )}
  </div>
);

const clips = [
  [{ from: 213, to: 642, className: "bg-[#4a463e]" }, { from: 235, to: 627, className: "border-b-2 border-[#b8b0a0] bg-[#6a6254]" }],
  [{ from: 124, to: 727, className: "bg-[#4e5986]" }],
  [],
  [],
  [],
  [{ from: 0, to: 727, className: "bg-[#4e5986]" }],
  [],
  [],
  [],
];

const Ruler = () => (
  <>
    <div className="flex h-2.5 items-center">
      <span className="h-[9px] w-1.5 rounded-l-full bg-[#4a98ec]" />
      <span className="ml-px h-2 flex-1 bg-[#646464]" />
      <span className="h-[9px] w-1.5 rounded-r-full bg-[#4a98ec]" />
    </div>
    <div className="flex h-[21px]">
      <span className="w-[7px]" />
      <div className="relative h-full flex-1 text-sm leading-[17px] text-[#b4b4b4]">
        {ticks.map((t, i) => (
          <span key={t} className="absolute bottom-0 flex h-full w-16 -translate-x-1/2 flex-col items-center" style={{ left: pct(i * 101) }}>
            {t}
          </span>
        ))}
        {ticks.map((t, i) => (
          <span key={t} className={clsx("absolute bottom-0 w-px bg-[#a0a0a0]", i % 2 ? "h-[5px]" : "h-2.5")} style={{ left: pct(i * 101) }} />
        ))}
      </div>
      <span className="w-1.5" />
    </div>
    <div className="flex h-[17px]">
      <span className="w-[7px] rounded-l-[5px] border-r border-black bg-[#4a98ec]" />
      <span className="flex-1 bg-[#5e5e5e]" />
      <span className="w-1.5 rounded-r-[5px] border-l border-black bg-[#4a98ec]" />
    </div>
    <div className="mr-1.5 ml-[7px] h-1 border-t border-[#111] bg-[#22b030]" />
  </>
);

const Tracks = () => (
  <div className="flex min-w-0 flex-1">
    <div className="relative flex min-w-0 flex-1 flex-col overflow-hidden pt-[31px]">
      <Ruler />
      <div className="flex flex-1 flex-col border-l border-black bg-[linear-gradient(90deg,#1d1d1d_6px,#262626_6px,#262626_calc(100%-6px),#1d1d1d_calc(100%-6px))]">
        <div className="flex h-[183px] flex-col">
          {clips.map((list, i) => (
            <div key={i} className={clsx("flex min-h-0 flex-1 border-b border-[#101010] px-1.5", rows[i].kind === "layer" && "bg-[#343434]")}>
              <div className="relative flex-1">
                {list.map((c) => (
                  <span
                    key={c.from}
                    className={clsx("absolute inset-y-px", c.className)}
                    style={{ left: pct(c.from), width: pct(c.to - c.from) }}
                  />
                ))}
                {i === 0 && (
                  <>
                    <svg viewBox="0 0 5 12" className="absolute bottom-0.5 h-3 w-[5px] -translate-x-full" style={{ left: pct(235) }} aria-hidden="true">
                      <path d="M5 0v12H0V5z" fill="#d8d8d8" stroke="#111" strokeWidth="1" />
                    </svg>
                    <svg viewBox="0 0 5 12" className="absolute bottom-0.5 h-3 w-[5px]" style={{ left: pct(627) }} aria-hidden="true">
                      <path d="M0 0v12h5V5z" fill="#d8d8d8" stroke="#111" strokeWidth="1" />
                    </svg>
                  </>
                )}
                {rows[i].kind !== "layer" && (
                  <svg viewBox="0 0 8 12" className="absolute top-1 h-3 w-2 -translate-x-1/2" fill="none" stroke="#a4b0c0" style={{ left: pct(236) }} aria-hidden="true">
                    <path d="M0 .5h8M0 11.500h8" />
                    <path d="M4 0v12" strokeWidth="3" />
                  </svg>
                )}
              </div>
            </div>
          ))}
        </div>
      </div>
      <div className="pointer-events-none absolute top-[31px] right-1.5 bottom-0 left-[7px]">
        <div className="absolute inset-y-0 flex w-[13px] -translate-x-1/2 flex-col items-center" style={{ left: pct(236) }}>
          <span className="h-2.5 w-px bg-[#7ca0c8]" />
          <svg viewBox="0 0 13 15" className="mt-[5px] h-[15px] w-[13px]" aria-hidden="true">
            <path d="M0 0h13v8l-6 7h-1L0 8z" fill="#5090e4" />
            <path d="M4 7.500h5M6.500 7v8" stroke="#1c2c44" />
          </svg>
          <span className="w-px flex-1 bg-[#5a9ce4]" />
        </div>
      </div>
    </div>
    <div className="flex w-[19px] shrink-0 flex-col items-center gap-1.5 pt-[65px] text-[#b4b4b4]">
      <svg viewBox="0 0 12 15" className="h-[15px] w-3" fill="currentColor" aria-hidden="true"><path d="M0 0h12v10l-6 5-6-5z" /></svg>
      <Icon><path d="M9 4h7v7H9z" fill="currentColor" stroke="none" /><path d="M1 8 8 1v6" strokeWidth="1.500" /><circle cx="7" cy="10.500" r="3" strokeWidth="1.500" /></Icon>
    </div>
  </div>
);

const TimelinePanel = () => (
  <section className="flex min-h-0 flex-1 flex-col border-x-2 border-y border-[#3f5f8c] bg-[#1d1d1d]">
    <div className="flex flex-1">
      <div className="flex w-[796px] shrink-0 flex-col border-r border-black">
        <header className="flex h-[25px] items-center pl-[29px] text-[13px] whitespace-nowrap text-[#b8b8b8]">
          <span className="w-[129px] [font-feature-settings:'palt']">レンダーキュー</span>
          <div className="flex h-[25px] items-center gap-3 border-b-2 border-[#bcbcbc] text-[#d0d0d0]">
            <span className="-mr-1 grid place-items-center"><CloseMark /></span>
            <Swatch />
            <h2 className="[font-feature-settings:'palt']">コンポ 1</h2>
            <Burger />
          </div>
          <span className="ml-[38px] flex items-center gap-3 [font-feature-settings:'palt']"><Swatch />コンポ1 &gt; シェイプ</span>
        </header>
        <div className="flex h-[38px] items-center border-b border-[#111]">
          <div className="w-[131px] text-center">
            <p className="text-sm leading-[15px] font-bold text-[#5ba4f4]">0:01:09:14</p>
            <p className="text-[13px] leading-[14px] whitespace-nowrap text-[#34609c]">01670 (24.00 fps)</p>
          </div>
          <label className="flex h-5 flex-1 items-center rounded-[3px] border border-[#292929] bg-[#0e0e0e] pl-1.5">
            <SearchGlyph />
            <input aria-label="レイヤーを検索" className="min-w-0 flex-1 outline-none" />
          </label>
          <div className="flex w-[146px] items-center justify-between pr-3 pl-3.5 text-[#b4b4b4]">
            <Icon className="size-[18px]"><path d="M0 3.500h5M8 3.500v8h5M4 4h4M8 7.500h5" strokeWidth="1.500" /><path d="M3 2h4v3H3zM11 5.500h4v3h-4zM9.500 11h5l-2.500 4z" fill="currentColor" stroke="none" /></Icon>
            <Shy className="size-4" />
            <Film className="size-[17px]" />
            <Blur className="size-4" />
            <Icon className="size-[17px]"><path d="M1 2.500h14v12H1zM4 0v2M8 0v2M12 0v2M4 6q4 0 5 3t4 3" strokeWidth="1.200" /></Icon>
          </div>
        </div>
        <LayerHead />
        <div className="flex h-[183px] flex-col text-xs text-[#c4c4c4]">
          {rows.map((row, i) => (
            <OutlineRow key={i} row={row} />
          ))}
        </div>
      </div>
      <Tracks />
    </div>
    <footer className="flex h-[20px] items-center text-xs text-[#c0c0c0]">
      <div className="flex h-full w-[797px] items-center gap-1 border-t border-black pl-1">
        <button type="button" aria-label="スイッチ" className="grid size-[17px] place-items-center rounded-[3px] bg-[#444]"><Icon className="size-3.5"><path d="M2 1.500h7v8H2zM5 4.500h8v10H5zM8 8h3v4H8z" strokeWidth="1.500" /></Icon></button>
        <button type="button" aria-label="転送制御" className="grid size-[17px] place-items-center rounded-[3px] bg-[#444]"><Icon className="size-3.5"><circle cx="6" cy="6" r="4.500" strokeWidth="1.500" /><path d="M7 7h7v7H7z" strokeWidth="1.500" /></Icon></button>
        <Icon className="size-[15px]"><path d="M6 1.500Q3.500 2 4 5t-2.500 3Q4 8 4 11t2 3.500M10 1.500q2.500.5 2 3.500t2.500 3Q12 8 12 11t-2 3.500" strokeWidth="1.500" /></Icon>
        <Icon className="ml-0.5 size-[15px]"><path d="M5 1q4 0 4 5 0 3-2 4h5q2 0 2-3V4" strokeWidth="2" /><circle cx="5" cy="6" r="4.500" fill="currentColor" stroke="none" /><path d="M1 11h12v3H1z" fill="currentColor" stroke="none" /></Icon>
        <p className="ml-6">フレームレンダリング時間 : <span className="text-[#80dca8]">12ms</span></p>
      </div>
      <div className="flex items-center gap-2 pl-1.5 text-[#b8b8b8]">
        <svg viewBox="0 0 10 6" className="h-1.5 w-2.5" fill="currentColor" aria-hidden="true"><path d="M0 6 3 3l1.500 1L7 0l3 6z" /></svg>
        <input type="range" aria-label="時間スケール" min="0" max="100" defaultValue="0" className="h-3 w-[62px] appearance-none bg-transparent [&::-webkit-slider-runnable-track]:h-3 [&::-webkit-slider-runnable-track]:bg-[linear-gradient(#555,#555)] [&::-webkit-slider-runnable-track]:bg-[length:48px_2px] [&::-webkit-slider-runnable-track]:bg-right [&::-webkit-slider-runnable-track]:bg-no-repeat [&::-webkit-slider-thumb]:size-3 [&::-webkit-slider-thumb]:appearance-none [&::-webkit-slider-thumb]:rounded-full [&::-webkit-slider-thumb]:border-2 [&::-webkit-slider-thumb]:border-[#b8b8b8] [&::-webkit-slider-thumb]:bg-[#1d1d1d]" />
        <svg viewBox="0 0 17 9" className="h-[9px] w-[17px]" fill="currentColor" aria-hidden="true"><path d="M0 9 4 4l2-1-2 6zM5 9l6-9 6 9z" /></svg>
      </div>
    </footer>
  </section>
);

/* ---------- Effects & Presets ---------- */

const effects = [
  "* アニメーションプリセット",
  "3D チャンネル",
  "Boris FX Mocha",
  "Cinema 4D",
  "Obsolete",
  "RG Magic Bullet",
  "RG Trapcode",
  "RG Universe Blur",
  "RG Universe Distort",
  "RG Universe Generators",
  "RG Universe Glow",
  "RG Universe Motion Graphics",
  "RG Universe Stylize",
  "RG Universe Text",
  "RG Universe Transitions",
  "RG Universe Utilities",
  "RG VFX",
  "Sapphire Adjust",
  "Sapphire Blur+Sharpen",
  "Sapphire Builder",
  "Sapphire Composite",
  "Sapphire Distort",
  "Sapphire Lighting",
  "Sapphire Render",
  "Sapphire Stylize",
  "Sapphire Time",
  "Sapphire Transitions",
  "イマーシブビデオ",
  "エクスプレッション制御",
  "オーディオ",
  "カラー補正",
  "キーイング",
  "シミュレーション",
  "スタイライズ",
  "チャンネル",
  "テキスト",
  "ディストーション",
  "トランジション",
  "ノイズ&グレイン",
  "ブラー&シャープ",
  "マット",
  "ユーティリティ",
  "描画",
  "旧バージョン",
  "時間",
  "遠近",
];

const EffectsPanel = () => (
  <aside className="flex w-[229px] shrink-0 flex-col bg-[#1d1d1d]">
    <header className="flex h-[26px] items-center pr-0.5 pl-3 text-[13px] whitespace-nowrap text-[#b8b8b8]">
      <div className="flex h-[26px] items-center gap-2.5 border-b-2 border-[#bcbcbc] pl-0.5 text-[#d0d0d0]">
        <h2>エフェクト＆プリセット</h2>
        <Burger />
      </div>
      <span className="mr-1 ml-auto w-2.5 overflow-hidden border-r border-[#606060] leading-5">プレビュー</span>
      <Chevrons />
    </header>
    <label className="mx-2 mt-[3px] mr-1 flex h-5 shrink-0 items-center rounded-[3px] border border-[#292929] bg-[#0e0e0e] pl-1.5">
      <SearchGlyph />
      <input aria-label="エフェクトを検索" className="min-w-0 flex-1 outline-none" />
    </label>
    <ul className="mt-0.5 mr-4 ml-1 flex h-[835px] shrink-0 flex-col border-t border-[#121212] font-['Open_Sans','Noto_Sans_CJK_JP',sans-serif] text-xs text-[#c0c0c0] [font-feature-settings:'palt']">
      {effects.map((name) => (
        <li key={name} className="flex min-h-0 flex-1 items-center gap-1 border-b border-[#121212] pl-1 whitespace-nowrap">
          <Right />
          {name}
        </li>
      ))}
    </ul>
    <div className="mt-auto mr-4 flex h-7 items-center justify-end border-t border-r border-black pr-3">
      <button type="button" aria-label="新規アニメーションプリセット">
        <svg viewBox="0 0 13 13" className="size-[13px]" fill="#c4c4c4" aria-hidden="true"><path d="M0 0h13v13H6V7H0zM1 8.500h3.500V12z" /></svg>
      </button>
    </div>
  </aside>
);

export default function App() {
  return (
    <div className="flex min-h-screen flex-col bg-black py-16 font-['Noto_Sans','Noto_Sans_CJK_JP',sans-serif]">
      <main className="flex flex-1 flex-col bg-white px-32 pt-[25px] pb-[26px]">
        <div className="flex flex-1 flex-col bg-linear-to-r from-[#f4f4f4] to-[#d0d0d0] pt-1.5">
          <div className="flex flex-1 flex-col overflow-hidden rounded-t-[10px] bg-black">
            <div className="flex h-[22px] items-center bg-[#383838]">
              <div className="flex flex-1 gap-1.5 pl-[5px]">
                <button type="button" aria-label="ウインドウを閉じる" className="grid size-2.5 place-items-center rounded-full bg-[#ec6a5e]">
                  <i className="size-1 rounded-full bg-[#8c1a10]" />
                </button>
                <button type="button" aria-label="しまう" className="size-2.5 rounded-full bg-[#f4bf4f]" />
                <button type="button" aria-label="拡大" className="size-2.5 rounded-full bg-[#61c554]" />
              </div>
              <h1 className="font-['Inter','Noto_Sans_CJK_JP',sans-serif] text-[11px] font-medium text-[#b4b4b4]">
                Adobe After Effects 2025 - 名称未設定プロジェクト *
              </h1>
              <div className="flex-1" />
            </div>
            <div className="flex flex-1 gap-1 pt-px">
              <div className="flex min-w-0 flex-1 flex-col gap-1">
                <div className="flex h-[520px] gap-1 pl-0.5">
                  <FlowPanel />
                  <div className="flex w-[226px] shrink-0 flex-col gap-[4px]">
                    <CharacterPanel />
                    <ParagraphPanel />
                    <AlignPanel />
                  </div>
                  <ViewerPanel />
                  <EffectControls />
                </div>
                <ToolsPanel />
                <TimelinePanel />
              </div>
              <EffectsPanel />
            </div>
          </div>
        </div>
      </main>
    </div>
  );
}
